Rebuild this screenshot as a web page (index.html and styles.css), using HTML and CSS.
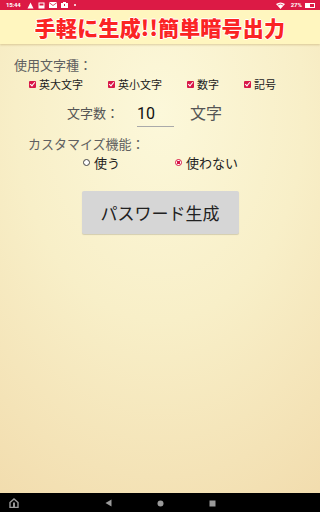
FILE: index.html
```html
<!DOCTYPE html>
<html lang="ja">
<head>
<meta charset="utf-8">
<link rel="stylesheet" href="styles.css">
</head>
<body>
<div class="screen">
  <div class="status">
    <div class="status-left">
      <span class="time">15:44</span>
      <svg class="si" width="7" height="7" viewBox="0 0 7 7"><path d="M3.5 0.5 L6.5 6.5 H0.5 Z" fill="#fff"/></svg>
      <svg class="si" width="7" height="7" viewBox="0 0 7 7"><rect x="0.5" y="0.5" width="6" height="6" fill="#fff"/><rect x="1.5" y="1.5" width="4" height="2" fill="#dc1a45"/></svg>
      <svg class="si" width="8" height="6" viewBox="0 0 8 6"><rect x="0" y="0" width="8" height="6" fill="#fff"/><path d="M0 0.5 L4 3.5 L8 0.5" stroke="#dc1a45" fill="none" stroke-width="0.8"/></svg>
      <svg class="si" width="7" height="6" viewBox="0 0 7 6"><rect x="0" y="1" width="7" height="5" fill="#fff"/><rect x="2" y="0" width="3" height="2" fill="#fff"/><rect x="3" y="2" width="1" height="2" fill="#dc1a45"/></svg>
      <span class="dot"></span>
    </div>
    <div class="status-right">
      <svg width="9" height="7" viewBox="0 0 9 7"><path d="M0 2 Q4.5 -1 9 2 L4.5 7 Z" fill="#fff"/><path d="M1.8 3 Q4.5 1.2 7.2 3" stroke="#dc1a45" fill="none" stroke-width="0.7"/></svg>
      <span class="pct">27%</span>
      <span class="batt"><span class="batt-fill"></span></span>
    </div>
  </div>
  <header class="titlebar">
    <h1 class="title">手軽に生成!!簡単暗号出力</h1>
  </header>
  <main class="content">
    <div class="label">使用文字種：</div>
    <div class="checks">
      <label class="check"><span class="box"></span>英大文字</label>
      <label class="check"><span class="box"></span>英小文字</label>
      <label class="check"><span class="box"></span>数字</label>
      <label class="check"><span class="box"></span>記号</label>
    </div>
    <div class="count-row">
      <span class="count-label">文字数：</span>
      <span class="count-input">10</span>
      <span class="count-unit">文字</span>
    </div>
    <div class="label label-custom">カスタマイズ機能：</div>
    <div class="radios">
      <label class="radio"><span class="circle"></span>使う</label>
      <label class="radio"><span class="circle on"></span>使わない</label>
    </div>
    <div class="btn-row">
      <button class="btn">パスワード生成</button>
    </div>
  </main>
  <nav class="navbar">
    <svg class="nav-home" width="10" height="10" viewBox="0 0 10 10"><path d="M1 4.5 L5 1 L9 4.5 V9.5 H1 Z" fill="none" stroke="#9a9a9a" stroke-width="1.4"/><rect x="4" y="4.5" width="2" height="5" fill="#9a9a9a"/></svg>
    <div class="nav-center">
      <svg width="7" height="8" viewBox="0 0 7 8"><path d="M6.5 0.5 V7.5 L0.5 4 Z" fill="#9a9a9a"/></svg>
      <svg width="7" height="7" viewBox="0 0 7 7"><circle cx="3.5" cy="3.5" r="3" fill="#9a9a9a"/></svg>
      <svg width="7" height="7" viewBox="0 0 7 7"><rect x="0.5" y="0.5" width="6" height="6" fill="#9a9a9a"/></svg>
    </div>
  </nav>
</div>
</body>
</html>
```

FILE: styles.css
```css
* { box-sizing: border-box; }
html, body { margin: 0; padding: 0; }
body {
  width: 320px;
  height: 512px;
  overflow: hidden;
  font-family: Roboto, "Noto Sans CJK JP", sans-serif;
}
.screen {
  width: 320px;
  height: 512px;
  display: flex;
  flex-direction: column;
  background: radial-gradient(ellipse 360px 520px at 50% 22%, #fcf8da 0%, #f8efc8 40%, #f0d7a6 100%);
}
.status {
  height: 10px;
  background: #dc1a45;
  display: flex;
  justify-content: space-between;
  align-items: center;
  padding: 0 5px 0 6px;
  color: #fff;
  font-size: 6px;
  line-height: 10px;
}
.status-left, .status-right {
  display: flex;
  align-items: center;
  gap: 3px;
}
.status-left { gap: 4px; }
.time { font-weight: 700; margin-right: 3px; letter-spacing: -0.2px; }
.dot { width: 2px; height: 2px; background: #fff; border-radius: 50%; margin-left: 2px; }
.pct { font-weight: 700; margin-left: 3px; }
.batt {
  width: 10px; height: 5px; border: 1px solid #fff; display: flex;
}
.batt-fill { width: 4px; background: #fff; }
.titlebar {
  height: 34px;
  background: #fff6bf;
  display: flex;
  align-items: center;
  justify-content: center;
  box-shadow: 0 1px 2px rgba(160, 130, 60, 0.35);
  position: relative;
  z-index: 1;
}
.title {
  margin: 0;
  font-family: "Noto Sans CJK JP", sans-serif;
  font-weight: 900;
  font-size: 21px;
  line-height: 1;
  color: #fb2424;
  letter-spacing: 0.2px;
  text-shadow: 1px 0 0 #fff, -1px 0 0 #fff, 0 1px 0 #fff, 0 -1px 0 #fff;
}
.content {
  flex: 1;
  display: flex;
  flex-direction: column;
  font-family: Roboto, "Noto Sans CJK JP", sans-serif;
}
.label {
  color: #606060;
  font-size: 13px;
  line-height: 16px;
}
.content > .label:first-child { margin: 14px 0 0 14px; }
.checks {
  display: flex;
  padding-left: 29px;
  margin-top: 2px;
  height: 16px;
  align-items: center;
}
.check {
  display: flex;
  align-items: center;
  font-size: 11px;
  color: #222;
}
.check:nth-child(1) { width: 79px; }
.check:nth-child(2) { width: 79px; }
.check:nth-child(3) { width: 57px; }
.box {
  width: 7px;
  height: 7px;
  background: #d81848;
  border-radius: 1px;
  margin-right: 3px;
  position: relative;
}
.box::after {
  content: "";
  position: absolute;
  left: 2px;
  top: 0px;
  width: 2px;
  height: 4px;
  border: solid #fff;
  border-width: 0 1px 1px 0;
  transform: rotate(40deg);
}
.count-row {
  display: flex;
  align-items: flex-end;
  margin-top: 11px;
  height: 24px;
}
.count-label {
  margin-left: 67px;
  width: 70px;
  font-size: 13px;
  color: #555;
  line-height: 18px;
  padding-bottom: 4px;
}
.count-input {
  width: 37px;
  font-size: 16px;
  color: #111;
  line-height: 20px;
  border-bottom: 1px solid #aaa;
  padding-bottom: 2px;
}
.count-unit {
  margin-left: 16px;
  font-size: 16px;
  color: #555;
  line-height: 20px;
  padding-bottom: 3px;
}
.label-custom { margin: 10px 0 0 28px; }
.radios {
  display: flex;
  margin-top: 1px;
  padding-left: 83px;
  height: 16px;
  align-items: center;
}
.radio {
  display: flex;
  align-items: center;
  font-size: 13px;
  color: #222;
}
.radio:first-child { width: 92px; }
.circle {
  width: 7px;
  height: 7px;
  border: 1px solid #444;
  border-radius: 50%;
  margin-right: 4px;
  background: #fff;
}
.circle.on {
  border-color: #d81848;
  background: radial-gradient(circle, #d81848 0 1.6px, #fff 2px);
}
.btn-row {
  display: flex;
  justify-content: center;
  margin-top: 21px;
}
.btn {
  width: 157px;
  height: 43px;
  background: #d6d6d6;
  border: none;
  border-radius: 2px;
  box-shadow: 0 1px 1px rgba(0,0,0,0.15);
  font-family: Roboto, "Noto Sans CJK JP", sans-serif;
  font-size: 17px;
  color: #222;
  padding: 0;
}
.navbar {
  height: 19px;
  background: #000;
  display: flex;
  align-items: center;
  position: relative;
}
.nav-home { margin-left: 9px; }
.nav-center {
  position: absolute;
  left: 105px;
  top: 6px;
  display: flex;
  align-items: center;
  gap: 45px;
}
```
